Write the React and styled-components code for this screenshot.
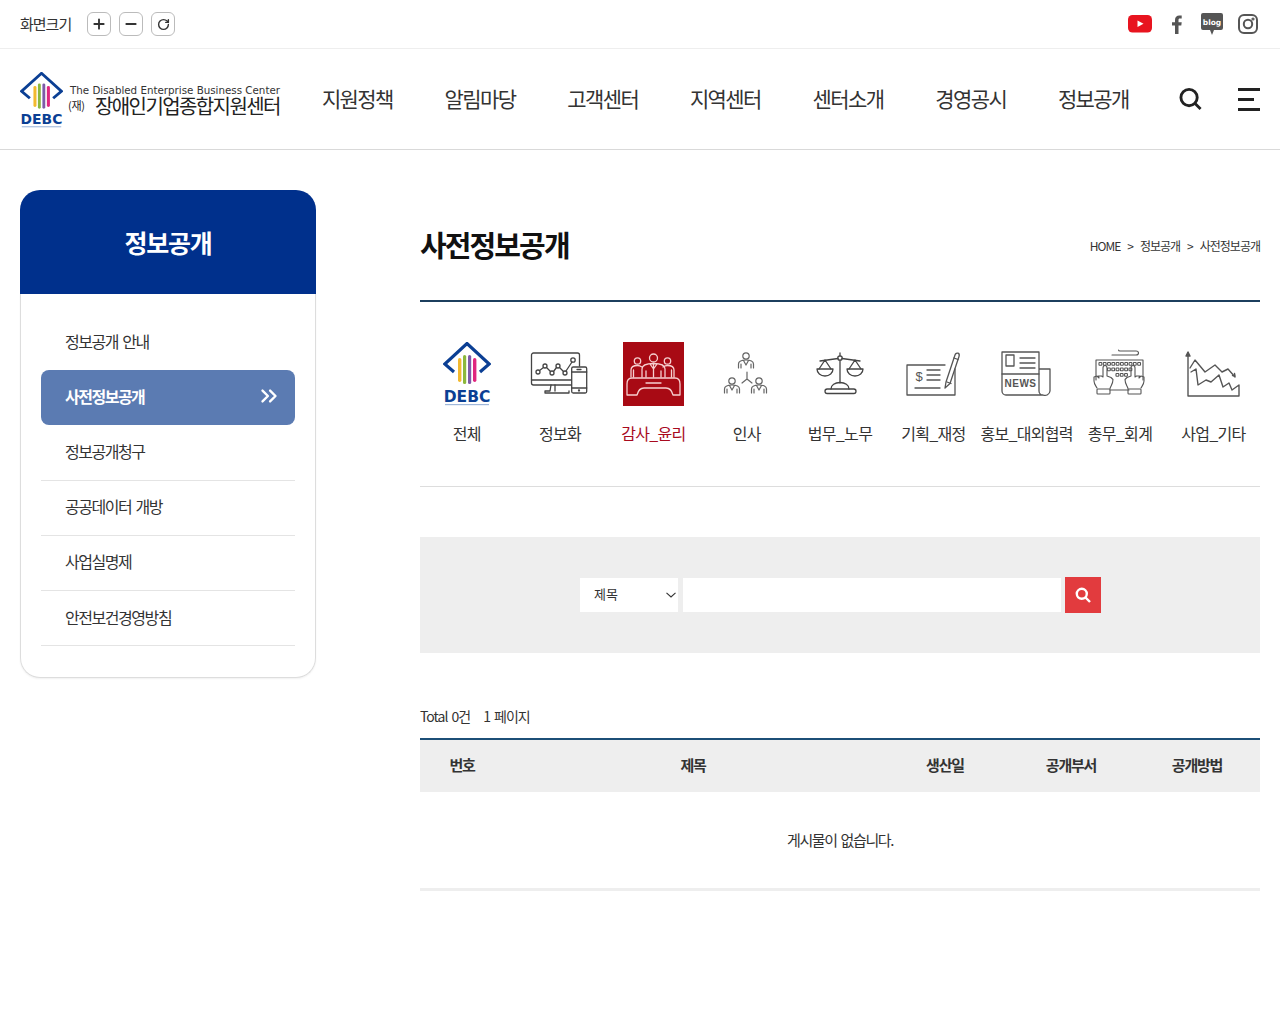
import React from "react";
import styled, { createGlobalStyle } from "styled-components";
import { Plus, Minus, RotateCw, ChevronsRight } from "lucide-react";

const GlobalStyle = createGlobalStyle`
  html, body { margin: 0; padding: 0; background: #fff; }
  body { font-family: "Noto Sans CJK KR", "Noto Sans", sans-serif; color: #333; }
  * { box-sizing: border-box; }
  ul { list-style: none; margin: 0; padding: 0; }
`;

const Page = styled.div`width: 1280px; min-height: 1024px; overflow: hidden;`;

const TopBar = styled.div`
  height: 49px; border-bottom: 1px solid #eee; padding: 0 22px 0 20px;
  display: flex; align-items: center; justify-content: space-between;
`;
const FontTools = styled.div`display: flex; align-items: center; gap: 8px;`;
const FontLabel = styled.span`font-size: 15px; letter-spacing: -1px; color: #333; margin-right: 8px; padding-bottom: 2px;`;
const FontButton = styled.button`
  width: 24px; height: 24px; padding: 0; border: 1px solid #bbb; border-radius: 6px; background: #fff; color: #333;
  display: flex; align-items: center; justify-content: center;
`;
const Socials = styled.div`display: flex; align-items: center;`;
const Social = styled.a`display: flex; margin-right: ${p => p.$gap || 0}px;`;

const Header = styled.header`
  height: 101px; border-bottom: 1px solid #d9d9d9; padding: 0 20px;
  display: flex; align-items: center;
`;
const Brand = styled.a`flex: 0 0 276px; display: flex; align-items: flex-start; gap: 5px; margin-top: 2px;`;
const BrandText = styled.div`display: flex; flex-direction: column; margin-top: 12px;`;
const BrandEn = styled.span`
  font-family: "DejaVu Sans", sans-serif; font-size: 10.3px; line-height: 12px; letter-spacing: 0; color: #333; margin-left: 2px; white-space: nowrap;
`;
const BrandKo = styled.span`
  font-size: 20px; line-height: 19px; letter-spacing: -1.6px; color: #222; font-weight: 400; white-space: nowrap;
  display: flex; align-items: center;
`;
const BrandPrefix = styled.small`font-size: 11px; letter-spacing: -0.3px; width: 27px; flex: none;`;
const Nav = styled.nav`flex: 0 0 858.7px; display: grid; grid-template-columns: repeat(7, 1fr); padding-bottom: 2px;`;
const NavItem = styled.a`font-size: 21px; letter-spacing: -1.6px; color: #333; text-align: center; white-space: nowrap;`;
const HeaderActions = styled.div`flex: 1; display: flex; align-items: center; justify-content: space-between; padding-left: 24px;`;
const Burger = styled.div`width: 22px; display: flex; flex-direction: column; gap: 7px;`;
const BurgerLine = styled.i`display: block; height: 3px; background: #222; width: ${p => p.$w}px;`;

const Body = styled.div`display: flex; align-items: flex-start; padding: 40px 20px 0;`;
const Side = styled.aside`flex: 0 0 296px;`;
const SideTitle = styled.h2`
  margin: 0; height: 104px; background: #00308c; color: #fff; border-radius: 20px 20px 0 0;
  font-size: 25px; font-weight: 700; letter-spacing: -1.2px; display: flex; align-items: center; justify-content: center;
`;
const SideMenu = styled.ul`
  border: 1px solid #ddd; border-top: 0; border-radius: 0 0 20px 20px; padding: 21px 20px 31px;
  box-shadow: 0 1px 2px rgba(0,0,0,.06);
`;
const SideItem = styled.li`
  height: 55.2px; padding: 0 13px 3px 24px; display: flex; align-items: center; justify-content: space-between;
  font-size: 16px; word-spacing: 2px;
  letter-spacing: ${p => p.$active ? "-1.5px" : "-1.45px"};
  color: ${p => p.$active ? "#fff" : "#333"};
  font-weight: ${p => p.$active ? 700 : 400};
  background: ${p => p.$active ? "#5b7bb2" : "transparent"};
  border-radius: ${p => p.$active ? "8px" : "0"};
  border-bottom: ${p => p.$line ? "1px solid #e4e4e4" : "0"};
`;

const Main = styled.main`flex: 0 0 840px; margin-left: 104px;`;
const TitleRow = styled.div`
  height: 112px; border-bottom: 2px solid #1c3f5e; display: flex; align-items: flex-start; justify-content: space-between;
`;
const Title = styled.h1`margin: 32px 0 0; font-size: 29px; line-height: 44px; font-weight: 700; letter-spacing: -1.9px; color: #111;`;
const Crumbs = styled.div`margin-top: 47px; display: flex; gap: 7px; font-size: 12px; line-height: 18px; letter-spacing: -1px; color: #333;`;

const Cats = styled.ul`
  display: grid; grid-template-columns: repeat(9, 1fr); height: 185px; padding-top: 40px; border-bottom: 1px solid #ddd;
`;
const Cat = styled.li`display: flex; flex-direction: column; align-items: center;`;
const CatIcon = styled.div`width: 64px; height: 64px; display: flex; justify-content: center;`;
const CatLabel = styled.span`
  margin-top: 15px; font-size: 16px; line-height: 24px; letter-spacing: -0.7px; white-space: nowrap;
  color: ${p => p.$active ? "#a80a1e" : "#333"};
`;

const SearchBox = styled.form`
  margin: 50px 0 0; height: 116px; background: #eee; display: flex; align-items: center; justify-content: center;
`;
const SearchRow = styled.div`display: flex; align-items: center; margin-top: -1px; margin-left: 1px;`;
const Select = styled.select`
  appearance: none; width: 98px; height: 34px; border: 0; margin-right: 5px; padding: 0 0 2px 14px;
  font: inherit; font-size: 13px; color: #333;
  background: #fff url("data:image/svg+xml,%3Csvg xmlns='http://www.w3.org/2000/svg' width='10' height='6' viewBox='0 0 10 6' fill='none' stroke='%23333' stroke-width='1.1'%3E%3Cpath d='M.5.8 5 5l4.500-4.200'/%3E%3C/svg%3E") no-repeat right 2px center;
`;
const Input = styled.input`width: 378px; height: 34px; border: 0; background: #fff; margin-right: 4px;`;
const SearchBtn = styled.button`
  width: 36px; height: 36px; border: 0; padding: 0; background: #e23b3e; display: flex; align-items: center; justify-content: center;
`;

const Info = styled.div`margin-top: 53px; display: flex; gap: 13px; font-size: 14px; line-height: 20px; letter-spacing: -1px; word-spacing: 2px; color: #333;`;
const Table = styled.table`
  margin-top: 12px; width: 840px; border-collapse: collapse; table-layout: fixed; border-top: 2px solid #1c4f77; border-bottom: 3px solid #eee;
`;
const Th = styled.th`
  width: ${p => p.$w}px; height: 53px; padding: 0 0 4px; background: #eee; font-size: 15px; font-weight: 700; letter-spacing: -1.2px; color: #333;
`;
const Td = styled.td`height: 97px; padding: 0; text-align: center; font-size: 15px; letter-spacing: -1.4px; word-spacing: 2px; color: #333;`;

const Logo = ({ w, h }) => (
  <svg width={w} height={h} viewBox="0 0 48 64" preserveAspectRatio="none">
    <polyline points="11,30 1.8,22 24,1.500 46.200,22 37,30" fill="none" stroke="#0b3f94" strokeWidth="3.200" />
    <rect x="15" y="16" width="3.400" height="24" rx="1.700" fill="#f2b92f" />
    <rect x="20" y="13" width="3.200" height="29" rx="1.600" fill="#8cb83c" />
    <rect x="25" y="13" width="3.200" height="29" rx="1.600" fill="#7d5ba8" />
    <rect x="30" y="16" width="3.400" height="24" rx="1.700" fill="#e0267f" />
    <text x="24" y="60" textAnchor="middle" fontFamily="'DejaVu Sans', sans-serif" fontWeight="700" fontSize="15.500" fill="#0b3f94">DEBC</text>
    <rect x="2" y="62" width="44" height="1.200" fill="#9fb7da" />
  </svg>
);

const Line = ({ children, c = "#444", sw = 1.3 }) => (
  <svg width="64" height="64" viewBox="0 0 64 64" fill="none" stroke={c} strokeWidth={sw} strokeLinecap="round" strokeLinejoin="round">{children}</svg>
);

const DeviceIcon = () => (
  <Line>
    <path d="M43.500 43H5.500a2 2 0 0 1-2-2V13a2 2 0 0 1 2-2h44a2 2 0 0 1 2 2v11" />
    <path d="M3.500 38H43.500M23 43l-1 6h-5v2h24v-2M27 43v6" />
    <circle cx="10" cy="30" r="2" /><circle cx="17" cy="24" r="2" /><circle cx="24" cy="31" r="2" />
    <circle cx="30" cy="24" r="2" /><circle cx="37" cy="31" r="2" /><circle cx="45" cy="18" r="2.200" />
    <path d="M11.500 28.500l4-3M18.500 25.500l4 4M25.500 29.500l3-4M31.500 25.500l4 4M38 29l6-9" />
    <rect x="43.700" y="25" width="15" height="26" rx="1.500" />
    <path d="M43.700 30h15M43.700 46h15M49 27.500h4" /><circle cx="51" cy="48.500" r=".5" />
  </Line>
);

const AuditIcon = () => (
  <svg width="61" height="64" viewBox="0 0 61 64" fill="none" stroke="#f6cfcf" strokeWidth="1.300" strokeLinejoin="round" strokeLinecap="round">
    <rect width="61" height="64" fill="#a80a14" stroke="none" />
    <circle cx="14.500" cy="19" r="3.200" /><circle cx="30.500" cy="16" r="4" /><circle cx="44.500" cy="19" r="3.200" />
    <path d="M8 35v-7c0-3 3-4.500 6.500-4.500 2 0 3 .5 4.500 1.500M10.500 28v7M51 35v-7c0-3-3-4.500-6.500-4.500-2 0-3 .5-4.500 1.500M48.500 28v7" />
    <path d="M19 35v-8c0-4 5-5.500 11.500-5.500S42 23 42 27v8M23 29v6M38 29v6M30.500 22v13M27 22l3.500 5 3.500-5" />
    <path d="M4 42c0-4 2-6 5-6h43c3 0 5 2 5 6v11h-7c-1-4-3-7-7-7H21c-4 0-6 3-7 7H4z" />
    <path d="M23 41h15" />
  </svg>
);

const Person = ({ x, y }) => (
  <g transform={`translate(${x} ${y})`}>
    <circle cx="0" cy="0" r="3.200" />
    <path d="M-7.500 12v-4c0-2.500 3-4 7.500-4s7.500 1.500 7.500 4v4M-5 8v4M5 8v4M-2.500 4.500L0 9l2.500-4.500" />
  </g>
);
const PeopleIcon = () => (
  <Line c="#666" sw="1.200">
    <Person x={31} y={14} />
    <Person x={17} y={39} />
    <Person x={44} y={39} />
    <path d="M32 30v7M32 37l-5 4M32 37l5 4" />
  </Line>
);

const ScaleIcon = () => (
  <Line c="#444" sw="1.300">
    <circle cx="32" cy="16" r="2.200" />
    <path d="M32 11v3M32 18.200V41M12 19l18-2.500M34 16.500L52 19" />
    <path d="M17 18l-6 9M17 18l6 9M47 18l-6 9M47 18l6 9" />
    <path d="M9 27h16c0 4-3.500 7-8 7s-8-3-8-7zM39 27h16c0 4-3.500 7-8 7s-8-3-8-7z" />
    <path d="M23 47c0-4 4-6.500 9-6.500s9 2.500 9 6.500" />
    <rect x="17" y="47" width="31" height="4.500" rx="2.200" />
  </Line>
);

const CheckIcon = () => (
  <Line c="#555" sw="1.300">
    <path d="M44 23H6v30h48V27" />
    <path d="M26 28h13M26 33h13M26 38h13M14 46h25" />
    <text x="18" y="39" textAnchor="middle" fontFamily="'Liberation Sans', sans-serif" fontSize="13" fill="#555" stroke="none">$</text>
    <path d="M44 46l1-6 9-27c.500-1.500 2-2.200 3-1.800s1.500 1.800 1 3.300l-9 27z" />
    <path d="M46 40l4 1.500M53 16l4 1.500" />
  </Line>
);

const NewsIcon = () => (
  <Line c="#555" sw="1.300">
    <path d="M47 53H11a4 4 0 0 1-4-4V10h37v39a4 4 0 0 0 4 4 5 5 0 0 0 7-4V27H44" />
    <rect x="11" y="13" width="8" height="11" />
    <path d="M25 16h15M25 21h15M25 26h15M7 32h37" />
    <text x="25.500" y="45" textAnchor="middle" fontFamily="'Liberation Sans', sans-serif" fontWeight="700" fontSize="10" letterSpacing=".5" fill="#555" stroke="none">NEWS</text>
  </Line>
);

const keys = [];
for (let i = 0; i < 10; i++) keys.push([11 + i * 4.300, 20.500]);
for (let i = 0; i < 6; i++) keys.push([19.500 + i * 4.300, 26]);
for (let i = 0; i < 3; i++) keys.push([28 + i * 4.300, 31.500]);

const Hand = ({ x, flip }) => (
  <g transform={`translate(${x} 0) scale(${flip ? -1 : 1} 1)`}>
    <path d="M-6 46c-1-2-3-4-3-7v-4l3-1 2 2-.5-2 3 0 1.500 1v-9c0-1.500 1-2.500 2-2.500s2 1 2 2.500v8l4 1.500 2 2c0 4-2 6-3 9" />
    <rect x="-6" y="47" width="13" height="5" rx=".8" />
  </g>
);
const KeyboardIcon = () => (
  <Line c="#555" sw="1.100">
    <path d="M8 38V18h47v20M22 48h19" />
    <path d="M24 13h24c2 0 2.500-1 2.500-2s-1-2-2.500-2H32c-1 0-1.500 0-1.500-1" />
    {keys.map(([x, y], i) => <rect key={i} x={x} y={y} width="2.800" height="2.800" rx=".5" />)}
    <Hand x={15} />
    <Hand x={47} flip />
  </Line>
);

const ChartIcon = () => (
  <Line c="#555" sw="1.400">
    <path d="M7 11v43h51V43l-7 5-3-7-6 4-4-12-8 7-5-2-8 5-2-16-5 3" />
    <path d="M5 14l2-4 2 4z" fill="#555" />
    <path d="M9 26l5-8 10 12 10-7 7 7 6-3 7 8" />
    <path d="M54 34l-.5-2.500M54 34l-2.500-.5" />
  </Line>
);

const categories = [
  ["전체", <Logo w={48} h={64} />],
  ["정보화", <DeviceIcon />],
  ["감사_윤리", <AuditIcon />, true],
  ["인사", <PeopleIcon />],
  ["법무_노무", <ScaleIcon />],
  ["기획_재정", <CheckIcon />],
  ["홍보_대외협력", <NewsIcon />],
  ["총무_회계", <KeyboardIcon />],
  ["사업_기타", <ChartIcon />],
];

const menu = [
  ["정보공개 안내"], ["사전정보공개", true], ["정보공개청구", false, true],
  ["공공데이터 개방", false, true], ["사업실명제", false, true], ["안전보건경영방침", false, true],
];

export default function App() {
  return (
    <Page>
      <GlobalStyle />
      <TopBar>
        <FontTools>
          <FontLabel>화면크기</FontLabel>
          <FontButton><Plus size={16} strokeWidth={2.800} /></FontButton>
          <FontButton><Minus size={16} strokeWidth={2.800} /></FontButton>
          <FontButton><RotateCw size={13} strokeWidth={2.600} /></FontButton>
        </FontTools>
        <Socials>
          <Social $gap={20}>
            <svg width="24" height="18" viewBox="0 0 24 18">
              <rect width="24" height="17.500" rx="4.500" fill="#e8141f" />
              <path d="M9.500 5.500v6.500l6-3.250z" fill="#fff" />
            </svg>
          </Social>
          <Social $gap={19}>
            <svg width="10" height="19" viewBox="0 0 10 19">
              <path d="M3 19v-8.500H0V7.300h3V5c0-3 1.700-4.600 4.300-4.600 1.200 0 2 .1 2.400.2v2.900H8c-1.300 0-1.500.6-1.500 1.500v2.300h3.200l-.4 3.200H6.500V19z" fill="#555" />
            </svg>
          </Social>
          <Social $gap={15}>
            <svg width="22" height="23" viewBox="0 0 22 23">
              <path d="M2 0h18a2 2 0 0 1 2 2v13a2 2 0 0 1-2 2h-7l-2 5-2-5H2a2 2 0 0 1-2-2V2a2 2 0 0 1 2-2z" fill="#555" />
              <text x="11" y="11.500" textAnchor="middle" fontFamily="'DejaVu Sans', sans-serif" fontWeight="700" fontSize="7.500" fill="#fff">blog</text>
            </svg>
          </Social>
          <Social>
            <svg width="20" height="20" viewBox="0 0 20 20" fill="none" stroke="#555" strokeWidth="2">
              <rect x="1" y="1" width="18" height="18" rx="5" />
              <circle cx="10" cy="10" r="4.200" />
              <circle cx="15" cy="5" r=".6" fill="#555" />
            </svg>
          </Social>
        </Socials>
      </TopBar>
      <Header>
        <Brand>
          <Logo w={43} h={56} />
          <BrandText>
            <BrandEn>The Disabled Enterprise Business Center</BrandEn>
            <BrandKo><BrandPrefix>(재)</BrandPrefix>장애인기업종합지원센터</BrandKo>
          </BrandText>
        </Brand>
        <Nav>
          {["지원정책", "알림마당", "고객센터", "지역센터", "센터소개", "경영공시", "정보공개"].map(t => <NavItem key={t}>{t}</NavItem>)}
        </Nav>
        <HeaderActions>
          <svg width="23" height="24" viewBox="0 0 24 24" fill="none" stroke="#222" strokeWidth="3">
            <circle cx="10.500" cy="10.500" r="8.500" />
            <path d="M16.500 16.500l6 6" />
          </svg>
          <Burger>
            <BurgerLine $w={22} />
            <BurgerLine $w={16} />
            <BurgerLine $w={22} />
          </Burger>
        </HeaderActions>
      </Header>
      <Body>
        <Side>
          <SideTitle>정보공개</SideTitle>
          <SideMenu>
            {menu.map(([t, active, line]) => (
              <SideItem key={t} $active={active} $line={line}>
                {t}
                {active && <ChevronsRight size={26} strokeWidth={2.200} />}
              </SideItem>
            ))}
          </SideMenu>
        </Side>
        <Main>
          <TitleRow>
            <Title>사전정보공개</Title>
            <Crumbs><span>HOME</span><span>&gt;</span><span>정보공개</span><span>&gt;</span><span>사전정보공개</span></Crumbs>
          </TitleRow>
          <Cats>
            {categories.map(([t, icon, active]) => (
              <Cat key={t}>
                <CatIcon>{icon}</CatIcon>
                <CatLabel $active={active}>{t}</CatLabel>
              </Cat>
            ))}
          </Cats>
          <SearchBox>
            <SearchRow>
              <Select defaultValue="제목"><option>제목</option></Select>
              <Input />
              <SearchBtn type="button">
                <svg width="16" height="16" viewBox="0 0 16 16" fill="none" stroke="#fff" strokeWidth="2.400">
                  <circle cx="6.800" cy="6.800" r="5" />
                  <path d="M10.500 10.500l4.500 4.500" />
                </svg>
              </SearchBtn>
            </SearchRow>
          </SearchBox>
          <Info><span>Total 0건</span><span>1 페이지</span></Info>
          <Table>
            <thead>
              <tr>
                <Th $w={84}>번호</Th>
                <Th $w={378}>제목</Th>
                <Th $w={126}>생산일</Th>
                <Th $w={126}>공개부서</Th>
                <Th $w={126}>공개방법</Th>
              </tr>
            </thead>
            <tbody>
              <tr><Td colSpan={5}>게시물이 없습니다.</Td></tr>
            </tbody>
          </Table>
        </Main>
      </Body>
    </Page>
  );
}
